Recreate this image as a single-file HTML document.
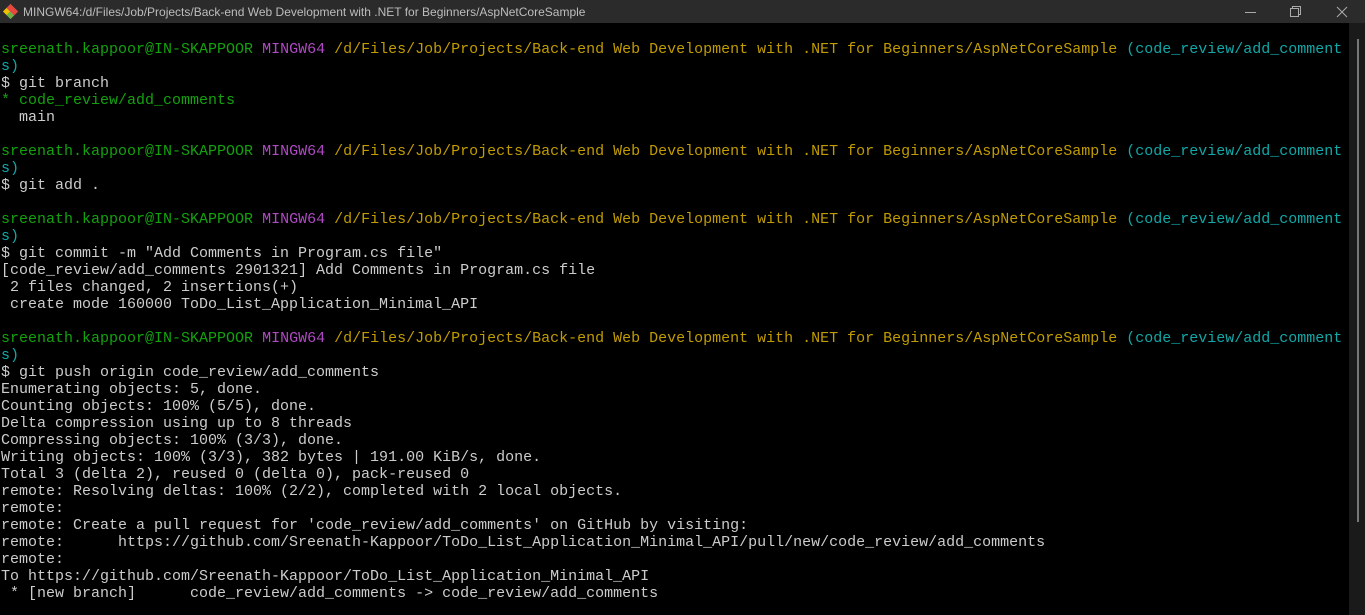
<!DOCTYPE html>
<html><head><meta charset="utf-8"><style>
html,body{margin:0;padding:0;width:1365px;height:615px;overflow:hidden;background:#000;}
.title{position:absolute;left:0;top:0;width:1365px;height:23px;background:#2b2b2b;color:#bdbdbd;font:12px "Liberation Sans",sans-serif;}
.title span{position:absolute;left:23px;top:5px;}
pre{position:absolute;left:1px;top:41px;margin:0;font:15px/17px "Liberation Mono",monospace;color:#cccccc;white-space:pre;}
.g{color:#13a10e}.m{color:#b148c6}.y{color:#c19c00}.c{color:#11a8a8}
.track{position:absolute;left:1349px;top:23px;width:16px;height:592px;background:#1a1a1a;}
.sb{position:absolute;left:1357px;top:39px;width:2px;height:483px;background:#777;}
</style></head><body>
<div class="title">
<svg style="position:absolute;left:3px;top:4px" width="15" height="15" viewBox="0 0 15 15"><path d="M7.5 0L15 7.5 7.5 15 0 7.5Z" fill="#4b9be0"/><path d="M7.5 0L15 7.5 11 11.5 3.5 4Z" fill="#e8473b"/><path d="M11 11.5L7.5 15 3.5 11 7 7.5Z" fill="#6db33f"/><path d="M0 7.5L3.5 4 7 7.5 3.5 11Z" fill="#f0c000"/></svg>
<span>MINGW64:/d/Files/Job/Projects/Back-end Web Development with .NET for Beginners/AspNetCoreSample</span>
<svg style="position:absolute;left:1240px;top:6px" width="110" height="12" viewBox="0 0 110 12"><path d="M5 6.5H16" stroke="#aaa" stroke-width="1"/><rect x="50.5" y="2.5" width="8" height="8" fill="none" stroke="#aaa"/><path d="M52.5 2.5V0.5H60.5V8.5H58.5" fill="none" stroke="#aaa"/><path d="M97 1L107 11M107 1L97 11" stroke="#aaa"/></svg>
</div>
<div class="track"></div>
<div class="sb"></div>
<pre><span class="g">sreenath.kappoor@IN-SKAPPOOR</span> <span class="m">MINGW64</span> <span class="y">/d/Files/Job/Projects/Back-end Web Development with .NET for Beginners/AspNetCoreSample</span> <span class="c">(code_review/add_comment
s)</span>
$ git branch
<span class="g">* code_review/add_comments</span>
  main

<span class="g">sreenath.kappoor@IN-SKAPPOOR</span> <span class="m">MINGW64</span> <span class="y">/d/Files/Job/Projects/Back-end Web Development with .NET for Beginners/AspNetCoreSample</span> <span class="c">(code_review/add_comment
s)</span>
$ git add .

<span class="g">sreenath.kappoor@IN-SKAPPOOR</span> <span class="m">MINGW64</span> <span class="y">/d/Files/Job/Projects/Back-end Web Development with .NET for Beginners/AspNetCoreSample</span> <span class="c">(code_review/add_comment
s)</span>
$ git commit -m "Add Comments in Program.cs file"
[code_review/add_comments 2901321] Add Comments in Program.cs file
 2 files changed, 2 insertions(+)
 create mode 160000 ToDo_List_Application_Minimal_API

<span class="g">sreenath.kappoor@IN-SKAPPOOR</span> <span class="m">MINGW64</span> <span class="y">/d/Files/Job/Projects/Back-end Web Development with .NET for Beginners/AspNetCoreSample</span> <span class="c">(code_review/add_comment
s)</span>
$ git push origin code_review/add_comments
Enumerating objects: 5, done.
Counting objects: 100% (5/5), done.
Delta compression using up to 8 threads
Compressing objects: 100% (3/3), done.
Writing objects: 100% (3/3), 382 bytes | 191.00 KiB/s, done.
Total 3 (delta 2), reused 0 (delta 0), pack-reused 0
remote: Resolving deltas: 100% (2/2), completed with 2 local objects.
remote:
remote: Create a pull request for 'code_review/add_comments' on GitHub by visiting:
remote:      https://github.com/Sreenath-Kappoor/ToDo_List_Application_Minimal_API/pull/new/code_review/add_comments
remote:
To https://github.com/Sreenath-Kappoor/ToDo_List_Application_Minimal_API
 * [new branch]      code_review/add_comments -> code_review/add_comments</pre>
</body></html>
